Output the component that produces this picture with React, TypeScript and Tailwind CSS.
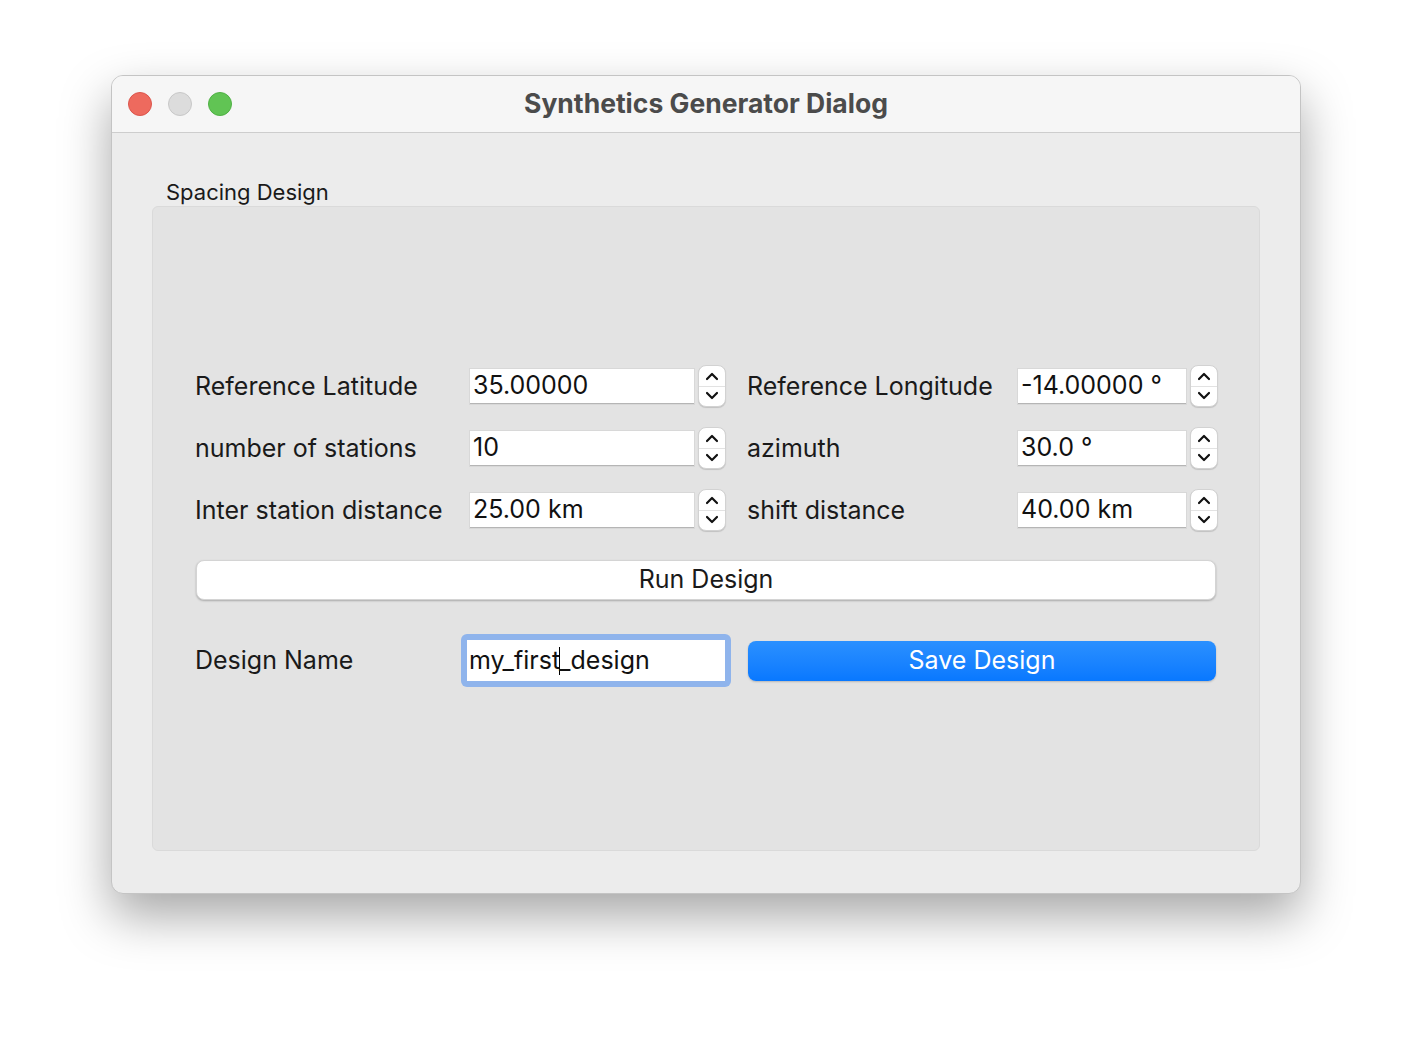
import React from 'react';

const font = { fontFamily: 'Inter, "Liberation Sans", Arial, sans-serif' };

function Spinner() {
  return (
    <div className="flex h-[42px] w-[28px] shrink-0 flex-col overflow-hidden rounded-[8px] border border-[#d2d2d2] bg-white shadow-[0_1px_1px_rgba(0,0,0,0.15)]">
      <div className="flex flex-1 items-center justify-center border-b border-[#e2e2e2] pt-[2px]">
        <svg width="14" height="9" viewBox="0 0 14 9">
          <path d="M2 7 L7 2 L12 7" fill="none" stroke="#111" strokeWidth="2.2" strokeLinecap="round" strokeLinejoin="round" />
        </svg>
      </div>
      <div className="flex flex-1 items-center justify-center pb-[2px]">
        <svg width="14" height="9" viewBox="0 0 14 9">
          <path d="M2 2 L7 7 L12 2" fill="none" stroke="#111" strokeWidth="2.2" strokeLinecap="round" strokeLinejoin="round" />
        </svg>
      </div>
    </div>
  );
}

function SpinField({ value, width }: { value: string; width: string }) {
  return (
    <div className="flex shrink-0 items-center gap-[4px]">
      <div className={`flex h-[35px] ${width} items-center border-b border-[#b5b5b5] bg-white pl-[3px] pt-[1px] text-[25px] text-[#111] shadow-[0_0_0_1px_#d8d8d8]`}>
        {value}
      </div>
      <Spinner />
    </div>
  );
}

function Row({ l1, v1, l2, v2 }: { l1: string; v1: string; l2: string; v2: string }) {
  return (
    <div className="flex h-[62px] items-center">
      <div className="w-[275px] shrink-0 pt-[1px] text-[25px] text-[#1a1a1a]">{l1}</div>
      <SpinField value={v1} width="w-[224px]" />
      <div className="ml-[21px] w-[271px] shrink-0 pt-[1px] text-[25px] text-[#1a1a1a]">{l2}</div>
      <SpinField value={v2} width="w-[168px]" />
    </div>
  );
}

export default function App() {
  return (
    <div className="h-[1042px] w-[1412px] bg-white pl-[111px] pt-[75px]" style={font}>
      <div className="flex h-[819px] w-[1190px] flex-col overflow-hidden rounded-[12px] border border-[#c4c4c4] bg-[#ececec] shadow-[0_22px_50px_rgba(0,0,0,0.35)]">
        {/* Title bar */}
        <div className="relative flex h-[57px] shrink-0 items-center justify-center border-b border-[#cdcdcd] bg-[#f6f6f6]">
          <div className="absolute left-[16px] top-[16px] flex gap-[16px]">
            <span className="h-[24px] w-[24px] rounded-full border border-[#dc554c] bg-[#ee6a5e]" />
            <span className="h-[24px] w-[24px] rounded-full border border-[#c8c8c8] bg-[#dcdcdc]" />
            <span className="h-[24px] w-[24px] rounded-full border border-[#4fb144] bg-[#61c454]" />
          </div>
          <div className="text-[26.5px] font-bold text-[#4b4b4b]">Synthetics Generator Dialog</div>
        </div>

        {/* Body */}
        <div className="flex flex-1 flex-col px-[40px] pt-[46px]">
          <div className="ml-[14px] h-[26px] text-[22px] leading-[26px] text-[#1a1a1a]">Spacing Design</div>
          <div className="mt-[1px] h-[645px] rounded-[6px] border border-[#dadada] bg-[#e3e3e3] pl-[42px] pr-[41px] pt-[148px]">
            <Row l1="Reference Latitude" v1="35.00000" l2="Reference Longitude" v2="-14.00000 °" />
            <Row l1="number of stations" v1="10" l2="azimuth" v2="30.0 °" />
            <Row l1="Inter station distance" v1="25.00 km" l2="shift distance" v2="40.00 km" />

            <button className="ml-[1px] mt-[19px] flex h-[40px] w-[1020px] items-center justify-center rounded-[8px] border border-[#d4d4d4] bg-white text-[25px] text-[#1a1a1a] shadow-[0_1px_2px_rgba(0,0,0,0.25)]">
              Run Design
            </button>

            <div className="mt-[34px] flex items-center">
              <div className="w-[266px] shrink-0 pt-[1px] text-[25px] text-[#1a1a1a]">Design Name</div>
              <div className="shrink-0 rounded-[6px] bg-[#8fb4ec] p-[6px]">
                <div className="flex h-[41px] w-[258px] items-center bg-white pl-[2px] pt-[1px] text-[25px] text-[#111]">
                  my_first<span className="mx-[-1px] inline-block h-[28px] w-[1px] bg-black" />_design
                </div>
              </div>
              <button className="ml-[17px] flex h-[40px] w-[468px] shrink-0 items-center justify-center rounded-[8px] bg-gradient-to-b from-[#2a90ff] to-[#0878ff] text-[25px] text-white shadow-[0_1px_2px_rgba(0,0,0,0.2)]">
                Save Design
              </button>
            </div>
          </div>
        </div>
      </div>
    </div>
  );
}
